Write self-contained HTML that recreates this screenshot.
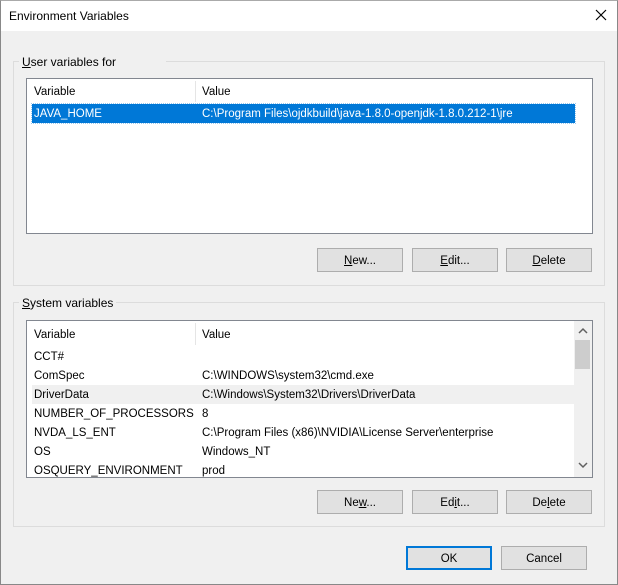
<!DOCTYPE html>
<html><head><style>
*{margin:0;padding:0;box-sizing:border-box}
body{width:618px;height:585px;background:#f0f0f0;font-family:"Liberation Sans",sans-serif;font-size:11.5px;color:#000;position:relative;overflow:hidden}
.a{position:absolute}
.win{left:0;top:0;width:618px;height:585px;border:1px solid #888;border-top-color:#aaa}
.title{left:1px;top:1px;width:616px;height:30px;background:#fff}
.grp{border:1px solid #dcdcdc}
.lbl{background:#f0f0f0;padding:0 3px}
.list{background:#fff;border:1px solid #828790}
.btn{background:#e1e1e1;border:1px solid #adadad;text-align:center;line-height:24px;height:24px;width:86px}
.row{left:0;height:19px;line-height:20px;width:548px}
.row span{position:absolute}
u{text-decoration:underline}
</style></head><body>
<div class="a win"></div>
<div class="a title"></div>
<div class="a" style="left:9px;top:9px;font-size:12px">Environment Variables</div>
<svg class="a" style="left:595px;top:9px" width="12" height="12"><path d="M1 1L11 11M11 1L1 11" stroke="#000" stroke-width="1.2"/></svg>

<div class="a grp" style="left:13px;top:61px;width:592px;height:225px"></div>
<div class="a lbl" style="left:19px;top:55px;font-size:12px"><u>U</u>ser variables for&nbsp;&nbsp;&nbsp;&nbsp;&nbsp;&nbsp;&nbsp;&nbsp;&nbsp;&nbsp;&nbsp;&nbsp;&nbsp;&nbsp;</div>
<div class="a list" style="left:26px;top:78px;width:567px;height:156px">
 <div class="a" style="left:7px;top:7px">Variable</div>
 <div class="a" style="left:168px;top:2px;width:1px;height:21px;background:#e5e5e5"></div>
 <div class="a" style="left:175px;top:7px">Value</div>
 <div class="a" style="left:5px;top:25px;width:543px;height:19px;background:#0078d7;color:#fff;line-height:21px;outline:1px dotted #99c9ef">
  <span class="a" style="left:2px">JAVA_HOME</span><span class="a" style="left:170px">C:\Program Files\ojdkbuild\java-1.8.0-openjdk-1.8.0.212-1\jre</span></div>
</div>
<div class="a btn" style="left:317px;top:248px"><u>N</u>ew...</div>
<div class="a btn" style="left:412px;top:248px"><u>E</u>dit...</div>
<div class="a btn" style="left:506px;top:248px"><u>D</u>elete</div>

<div class="a grp" style="left:13px;top:302px;width:592px;height:225px"></div>
<div class="a lbl" style="left:19px;top:296px;font-size:12px"><u>S</u>ystem variables</div>
<div class="a list" style="left:26px;top:320px;width:567px;height:158px;overflow:hidden">
 <div class="a" style="left:7px;top:8px">Variable</div>
 <div class="a" style="left:168px;top:2px;width:1px;height:22px;background:#e5e5e5"></div>
 <div class="a" style="left:175px;top:8px">Value</div>
 <div class="a" style="left:5px;top:26px;width:543px;height:140px">
  <div class="a row" style="top:0"><span style="left:2px">CCT#</span></div>
  <div class="a row" style="top:19px"><span style="left:2px">ComSpec</span><span style="left:170px">C:\WINDOWS\system32\cmd.exe</span></div>
  <div class="a row" style="top:38px;background:#f0f0f0"><span style="left:2px">DriverData</span><span style="left:170px">C:\Windows\System32\Drivers\DriverData</span></div>
  <div class="a row" style="top:57px"><span style="left:2px">NUMBER_OF_PROCESSORS</span><span style="left:170px">8</span></div>
  <div class="a row" style="top:76px"><span style="left:2px">NVDA_LS_ENT</span><span style="left:170px">C:\Program Files (x86)\NVIDIA\License Server\enterprise</span></div>
  <div class="a row" style="top:95px"><span style="left:2px">OS</span><span style="left:170px">Windows_NT</span></div>
  <div class="a row" style="top:114px"><span style="left:2px">OSQUERY_ENVIRONMENT</span><span style="left:170px">prod</span></div>
 </div>
 <div class="a" style="left:547px;top:0;width:18px;height:156px;background:#f0f0f0"></div>
 <div class="a" style="left:548px;top:19px;width:15px;height:29px;background:#cdcdcd"></div>
 <svg class="a" style="left:551px;top:6px" width="10" height="8"><path d="M1 6L5 2L9 6" stroke="#606060" stroke-width="1.5" fill="none"/></svg>
 <svg class="a" style="left:551px;top:140px" width="10" height="8"><path d="M1 2L5 6L9 2" stroke="#606060" stroke-width="1.5" fill="none"/></svg>
</div>
<div class="a btn" style="left:317px;top:490px">Ne<u>w</u>...</div>
<div class="a btn" style="left:412px;top:490px">Ed<u>i</u>t...</div>
<div class="a btn" style="left:506px;top:490px">De<u>l</u>ete</div>

<div class="a btn" style="left:406px;top:546px;border:2px solid #0078d7;line-height:22px">OK</div>
<div class="a btn" style="left:501px;top:546px">Cancel</div>
</body></html>
